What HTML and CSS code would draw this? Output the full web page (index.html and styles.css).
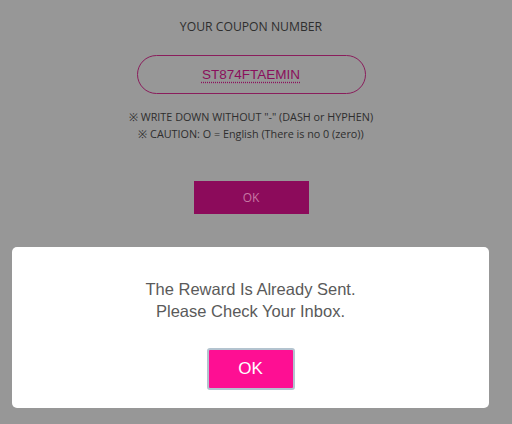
FILE: index.html
```html
<!DOCTYPE html>
<html lang="en">
<head>
    <meta charset="UTF-8">
    <meta name="viewport" content="width=device-width, initial-scale=1.0">
    <title>Coupon</title>
    <link rel="stylesheet" href="styles.css">
</head>
<body>
    <div class="page">
        <div class="title">YOUR COUPON NUMBER</div>
        <div class="coupon"><span class="code">ST874FTAEMIN</span></div>
        <div class="notes">
            <p>※ WRITE DOWN WITHOUT "-" (DASH or HYPHEN)</p>
            <p>※ CAUTION: O = English (There is no 0 (zero))</p>
        </div>
        <button class="submit">OK</button>
    </div>

    <div class="dialog">
        <p class="message">The Reward Is Already Sent.<br>Please Check Your Inbox.</p>
        <button class="dialog-ok">OK</button>
    </div>
</body>
</html>
```

FILE: styles.css
```css
body {
    margin: 0;
    background-color: #979797;
    font-family: "Open Sans", Arial, sans-serif;
    width: 512px;
    height: 424px;
    overflow: hidden;
    position: relative;
}
.page {
    display: flex;
    flex-direction: column;
    align-items: center;
    padding: 18px 10px 0 0;
}
.title {
    font-size: 12.2px;
    line-height: 18px;
    color: #2e2e2e;
}
.coupon {
    margin-top: 19px;
    width: 227px;
    height: 37px;
    border: 1.5px solid #8a1d5c;
    border-radius: 21px;
    display: flex;
    justify-content: center;
    align-items: center;
}
.code {
    font-family: "Liberation Sans", Arial, sans-serif;
    font-size: 13.5px;
    color: #8a0f5c;
    text-decoration: underline dotted #8a0f5c;
    text-underline-offset: 3px;
}
.notes {
    margin-top: 14px;
    text-align: center;
    font-size: 10.8px;
    line-height: 17px;
    color: #2e2e2e;
}
.notes p {
    margin: 0;
}
.submit {
    margin-top: 39px;
    width: 115px;
    height: 33px;
    border: none;
    background-color: #8c0b5b;
    color: #c777a4;
    font-family: "Open Sans", Arial, sans-serif;
    font-size: 12px;
}
.dialog {
    position: absolute;
    left: 12px;
    top: 247px;
    width: 477px;
    height: 161px;
    background-color: #fff;
    border-radius: 5px;
    display: flex;
    flex-direction: column;
    align-items: center;
}
.message {
    margin: 31px 0 0;
    text-align: center;
    font-family: "Liberation Sans", Arial, sans-serif;
    font-size: 16.5px;
    line-height: 22px;
    color: #5a5a5a;
}
.dialog-ok {
    margin-top: 26px;
    width: 88px;
    height: 42px;
    background-color: #fe0f93;
    border: 2px solid #b3c3cf;
    border-radius: 3px;
    color: #fff;
    font-family: "Liberation Sans", Arial, sans-serif;
    font-size: 17px;
}
```
